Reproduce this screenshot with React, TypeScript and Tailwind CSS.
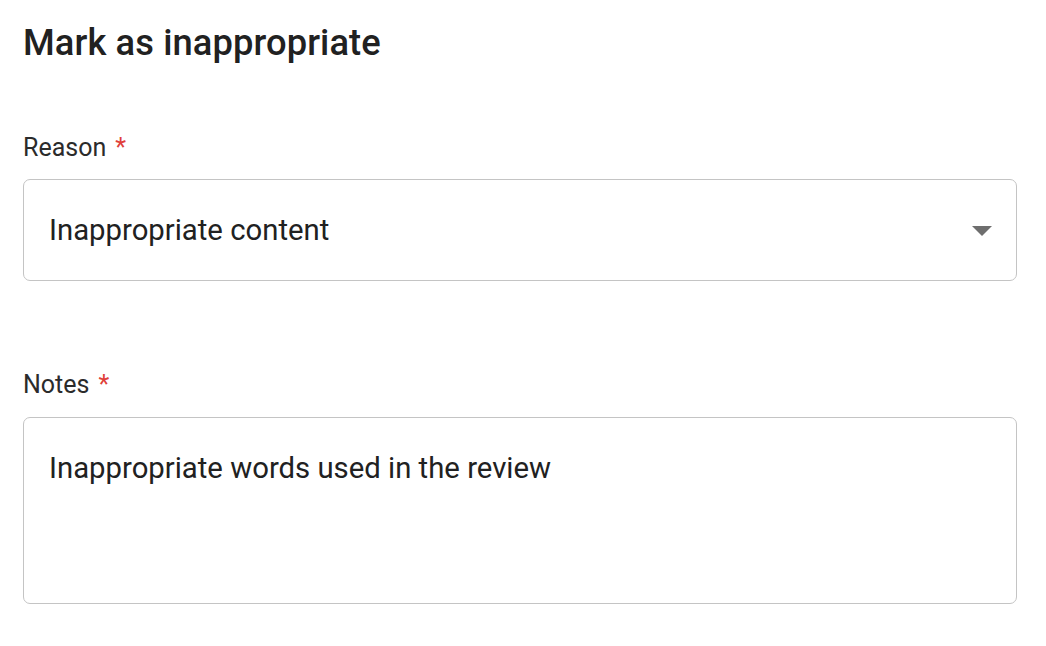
import React from "react";

const Required = () => <span className="ml-[9px] text-[#e0403a]">*</span>;

const App = () => {
  return (
    <div className="min-h-screen bg-white font-['Roboto',sans-serif] text-[#212121] pl-[23px]">
      <h1 className="pt-[21px] text-[36.3px] leading-[44px] font-medium tracking-[0.1px]">
        Mark as inappropriate
      </h1>

      <div className="mt-[67px] w-[994px]">
        <label className="block text-[25px] leading-[32px] text-[#2b2b2b]">
          Reason
          <Required />
        </label>
        <div className="mt-[15px] flex h-[102px] items-center justify-between rounded-[7px] border border-[#c4c4c4] pl-[25px] pr-[10px]">
          <span className="text-[29.3px] leading-[36px]">Inappropriate content</span>
          <svg viewBox="0 0 24 24" className="h-[48px] w-[48px] fill-[#6e6e6e]">
            <path d="M7 10l5 5 5-5z" />
          </svg>
        </div>

        <label className="mt-[88px] block text-[25px] leading-[32px] text-[#2b2b2b]">
          Notes
          <Required />
        </label>
        <div className="mt-[16px] h-[187px] rounded-[7px] border border-[#c4c4c4] px-[25px] pt-[32px]">
          <p className="text-[29.3px] leading-[36px]">
            Inappropriate words used in the review
          </p>
        </div>
      </div>
    </div>
  );
};

export default App;
